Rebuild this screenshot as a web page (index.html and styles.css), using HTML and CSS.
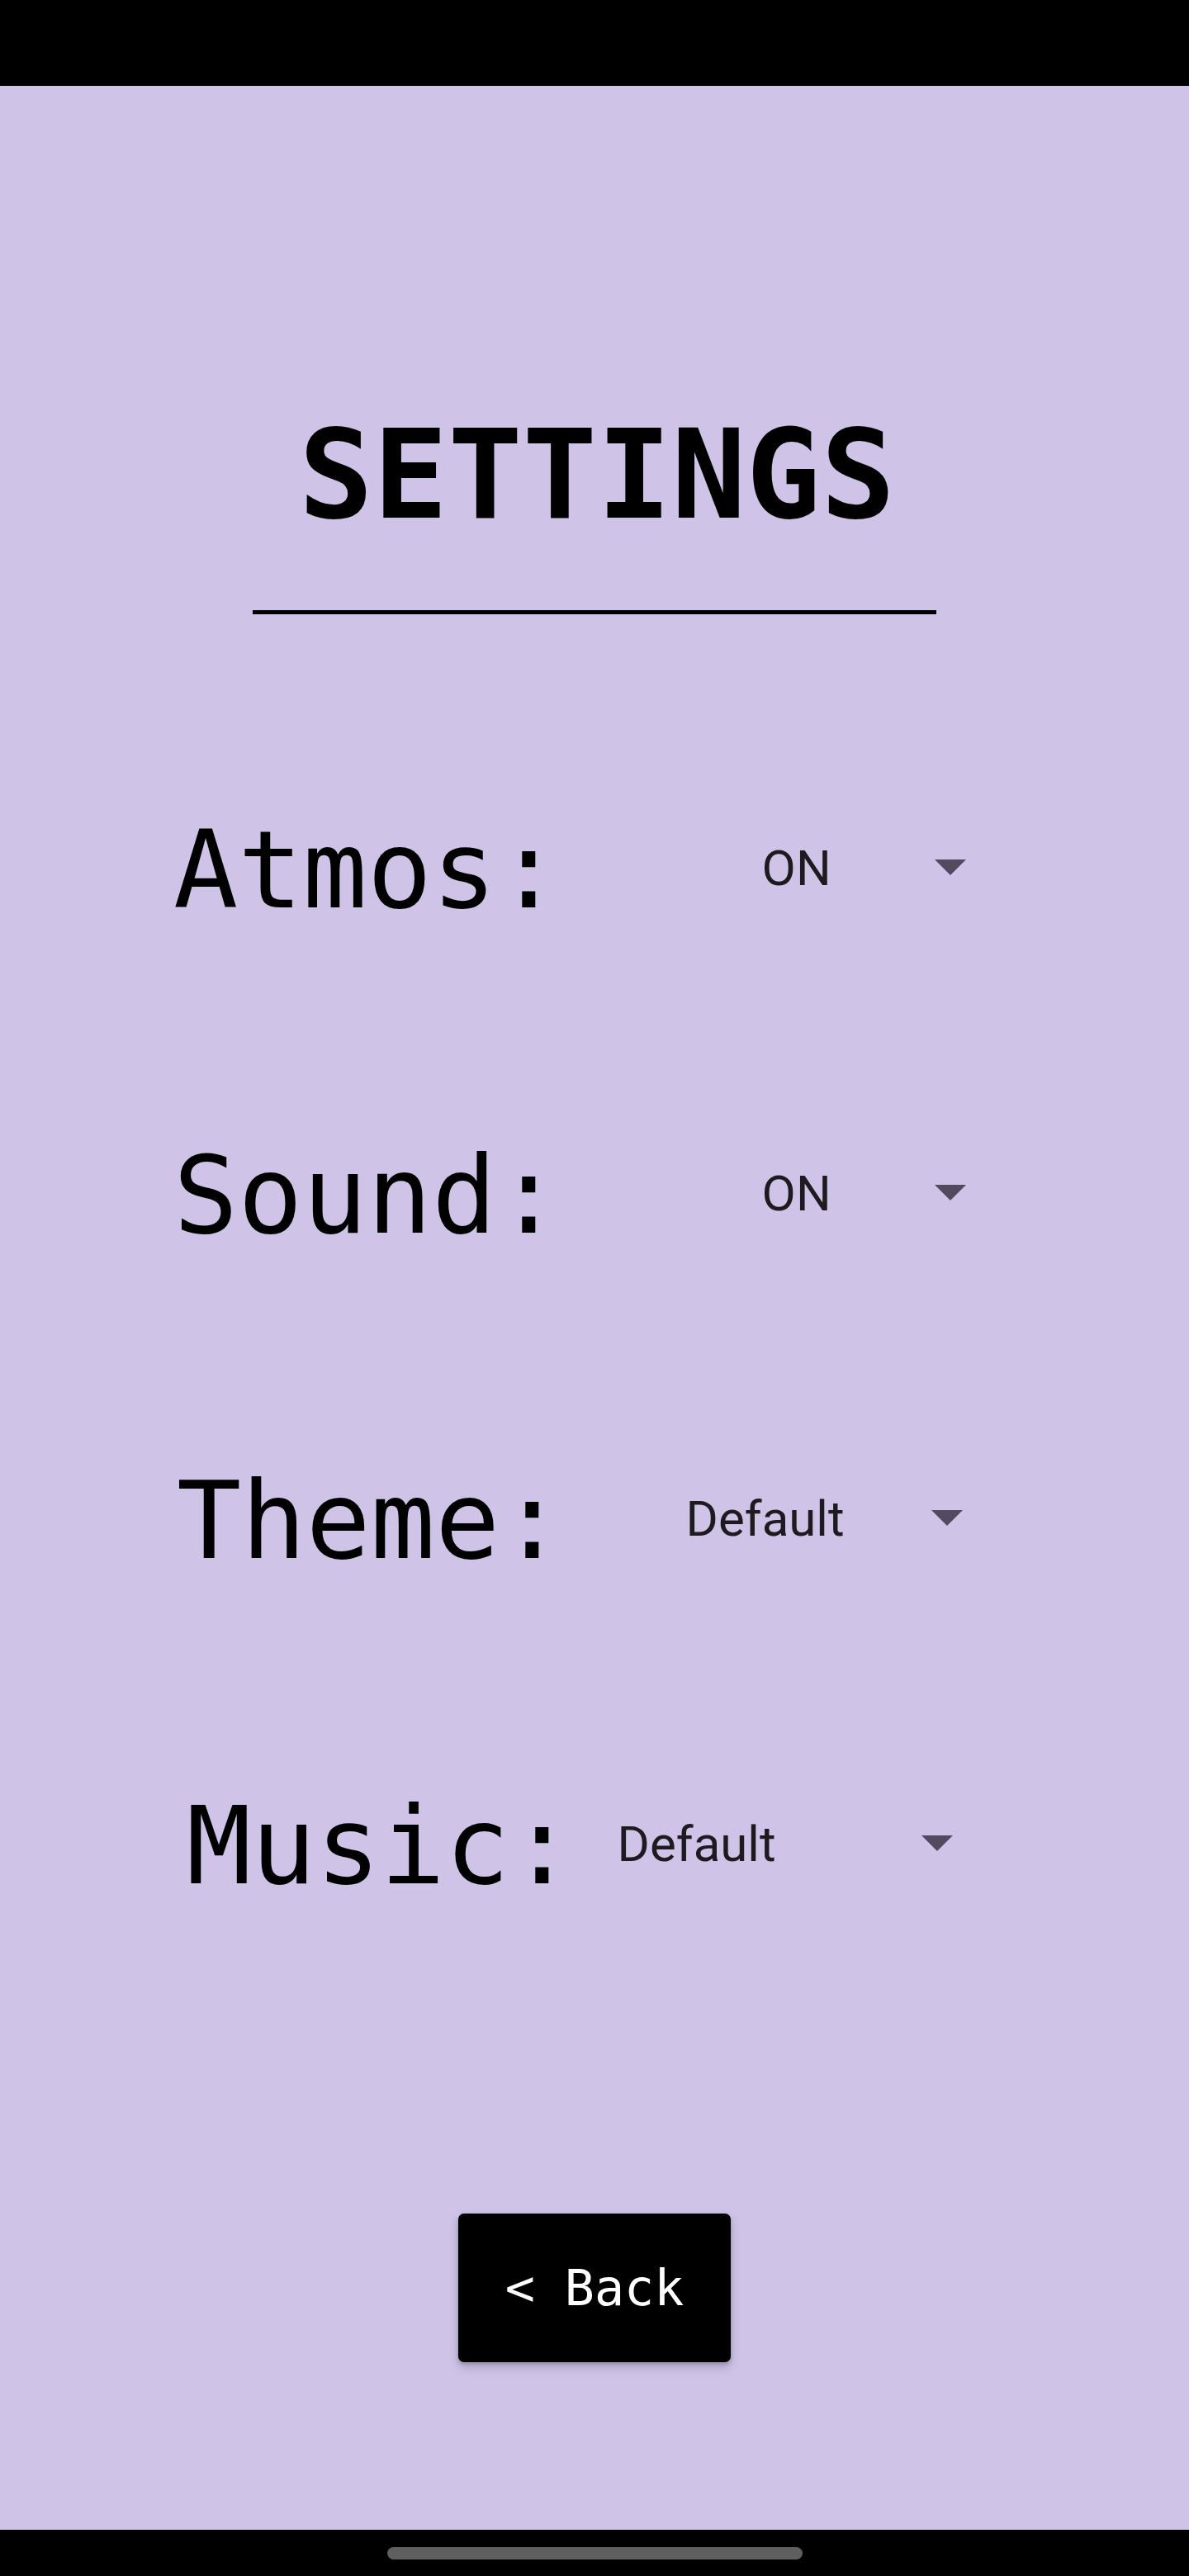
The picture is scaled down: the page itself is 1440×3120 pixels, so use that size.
FILE: index.html
```html
<!DOCTYPE html>
<html lang="en">
<head>
<meta charset="utf-8">
<title>Settings</title>
<link rel="stylesheet" href="styles.css">
</head>
<body>
<div class="screen">
  <div class="status-bar"></div>
  <main class="main">
    <h1 class="title">SETTINGS</h1>
    <div class="rule"></div>
    <div class="rows">
      <div class="row row--atmos">
        <span class="label">Atmos:</span>
        <div class="spinner spinner--atmos">
          <span class="value">ON</span>
          <svg class="arrow" width="38" height="19" viewBox="0 0 38 19"><polygon points="0,0 38,0 19,19"/></svg>
        </div>
      </div>
      <div class="row row--sound">
        <span class="label">Sound:</span>
        <div class="spinner spinner--sound">
          <span class="value">ON</span>
          <svg class="arrow" width="38" height="19" viewBox="0 0 38 19"><polygon points="0,0 38,0 19,19"/></svg>
        </div>
      </div>
      <div class="row row--theme">
        <span class="label">Theme:</span>
        <div class="spinner spinner--theme">
          <span class="value">Default</span>
          <svg class="arrow" width="38" height="19" viewBox="0 0 38 19"><polygon points="0,0 38,0 19,19"/></svg>
        </div>
      </div>
      <div class="row row--music">
        <span class="label">Music:</span>
        <div class="spinner spinner--music">
          <span class="value">Default</span>
          <svg class="arrow" width="38" height="19" viewBox="0 0 38 19"><polygon points="0,0 38,0 19,19"/></svg>
        </div>
      </div>
    </div>
    <div class="button-wrap">
      <button class="back-button">&lt; Back</button>
    </div>
  </main>
  <div class="nav-bar"><div class="home-pill"></div></div>
</div>
</body>
</html>
```
FILE: styles.css
```css
html, body {
  margin: 0;
  padding: 0;
  background: #cfc4e7;
}
body {
  width: 1440px;
  height: 3120px;
  overflow: hidden;
}
.screen {
  display: flex;
  flex-direction: column;
  width: 1440px;
  height: 3120px;
}
.status-bar {
  height: 104px;
  background: #000;
  flex: none;
}
.main {
  height: 2960px;
  flex: none;
  background: #cfc4e7;
  display: flex;
  flex-direction: column;
  align-items: stretch;
}
.title {
  margin: 396px 0 0 0;
  font-family: "DejaVu Sans Mono", "Liberation Mono", monospace;
  font-weight: bold;
  font-size: 150px;
  line-height: 150px;
  height: 150px;
  text-align: center;
  color: #000;
  padding-left: 6px;
}
.rule {
  margin: 89px auto 0 auto;
  width: 828px;
  height: 5px;
  background: #000;
}
.rows {
  margin-top: 244px;
  display: flex;
  flex-direction: column;
  gap: 262px;
}
.row {
  display: flex;
  align-items: center;
  height: 132px;
}
.row--atmos { padding-left: 210px; }
.row--sound { padding-left: 210px; }
.row--theme { padding-left: 214px; }
.row--music { padding-left: 226px; }
.label {
  font-family: "DejaVu Sans Mono", "Liberation Mono", monospace;
  font-size: 130px;
  line-height: 132px;
  color: #000;
  white-space: pre;
}
.spinner {
  display: flex;
  align-items: center;
  justify-content: space-between;
  height: 132px;
}
.spinner--atmos { margin-left: 243px; width: 247px; }
.spinner--sound { margin-left: 243px; width: 247px; }
.spinner--theme { margin-left: 147px; width: 335px; }
.spinner--music { margin-left: 52px; width: 406px; }
.value {
  font-family: Roboto, "Noto Sans", sans-serif;
  font-size: 60px;
  line-height: 60px;
  color: #1d1b20;
  position: relative;
  top: -2px;
}
.arrow {
  fill: #524a5e;
  display: block;
  position: relative;
  top: -4px;
}
.button-wrap {
  margin-top: 379px;
  display: flex;
  justify-content: center;
}
.back-button {
  width: 330px;
  height: 180px;
  border: none;
  border-radius: 7px;
  background: #000;
  color: #fff;
  font-family: "DejaVu Sans Mono", "Liberation Mono", monospace;
  font-size: 60px;
  line-height: 60px;
  padding: 0;
  display: flex;
  align-items: center;
  justify-content: center;
  white-space: pre;
  box-shadow: 0 6px 12px rgba(40, 20, 70, 0.22), 0 2px 4px rgba(0, 0, 0, 0.18);
}
.nav-bar {
  height: 56px;
  background: #000;
  flex: none;
  display: flex;
  justify-content: center;
  padding-top: 21px;
  box-sizing: border-box;
}
.home-pill {
  width: 503px;
  height: 15px;
  border-radius: 8px;
  background: #5f5f5f;
}
```
